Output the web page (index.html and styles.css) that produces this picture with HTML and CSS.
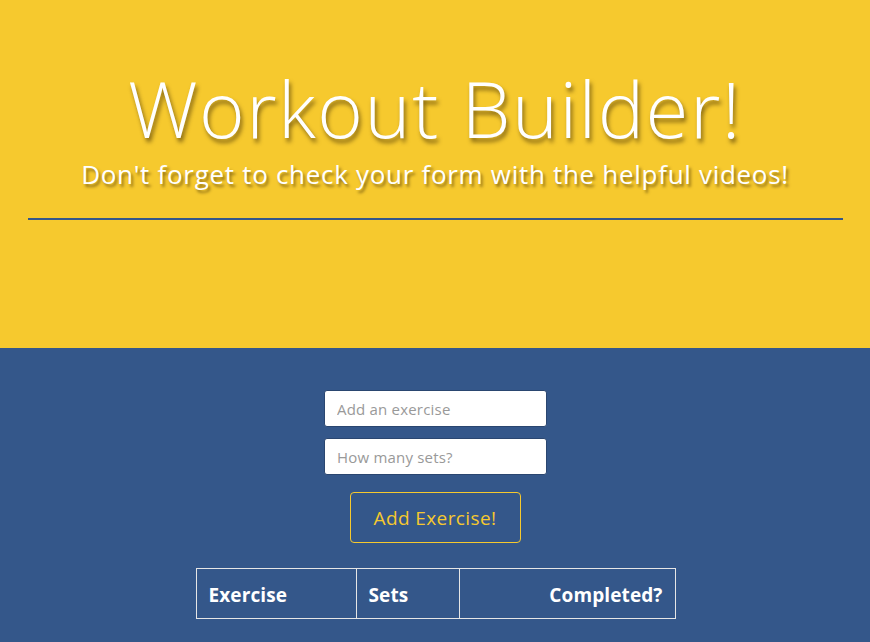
FILE: index.html
```html
<!DOCTYPE html>
<html>
<head>
<meta charset="utf-8">
<link rel="stylesheet" href="styles.css">
</head>
<body>
<header class="hero">
  <h1 class="title">Workout Builder!</h1>
  <p class="subtitle">Don't forget to check your form with the helpful videos!</p>
  <hr class="rule">
</header>
<main class="panel">
  <form class="form">
    <input class="field" type="text" placeholder="Add an exercise">
    <input class="field" type="text" placeholder="How many sets?">
    <button class="btn" type="button">Add Exercise!</button>
  </form>
  <table class="table">
    <thead>
      <tr>
        <th class="c1">Exercise</th>
        <th class="c2">Sets</th>
        <th class="c3">Completed?</th>
      </tr>
    </thead>
  </table>
</main>
</body>
</html>
```
FILE: styles.css
```css
html, body {
  margin: 0;
  padding: 0;
  height: 100%;
}
body {
  font-family: "Open Sans", "Noto Sans", sans-serif;
  background: #34578a;
  overflow: hidden;
}
.hero {
  background: #f6c92e;
  height: 348px;
  box-sizing: border-box;
  padding-top: 64px;
  text-align: center;
}
.title {
  margin: 0;
  color: #fff;
  font-weight: 300;
  font-size: 78px;
  line-height: 88px;
  letter-spacing: 1.5px;
  text-shadow: 2px 4px 4px rgba(60, 40, 0, 0.6);
}
.subtitle {
  margin: 2px 0 0;
  color: #fff;
  font-size: 26px;
  line-height: 40px;
  letter-spacing: 0.7px;
  text-shadow: 2px 3px 3px rgba(60, 40, 0, 0.55);
}
.rule {
  margin: 24px 27px 0 28px;
  border: 0;
  height: 2px;
  background: #34578a;
}
.panel {
  display: flex;
  flex-direction: column;
  align-items: center;
  padding-top: 42px;
}
.form {
  display: flex;
  flex-direction: column;
  align-items: center;
  gap: 11px;
}
.field {
  width: 223px;
  height: 37px;
  box-sizing: border-box;
  border: 1px solid #2a4670;
  border-radius: 3px;
  background: #fff;
  padding: 0 12px;
  font-family: "Open Sans", sans-serif;
  font-size: 15px;
  letter-spacing: 0.2px;
  color: #333;
  margin-left: 1px;
}
.field::placeholder {
  color: #999;
}
.btn {
  margin-top: 6px;
  width: 171px;
  height: 51px;
  background: transparent;
  border: 1px solid #f6c92e;
  border-radius: 4px;
  color: #f6c92e;
  font-family: "Open Sans", sans-serif;
  font-size: 19px;
  letter-spacing: 0.4px;
  cursor: pointer;
}
.table {
  margin-top: 25px;
  margin-left: 1px;
  border-collapse: collapse;
  color: #fff;
}
.table th {
  border: 1px solid #e6e6e6;
  height: 50px;
  box-sizing: border-box;
  padding: 2px 12px 0;
  font-size: 19px;
  font-weight: 700;
  letter-spacing: 0.1px;
  text-align: left;
}
.c1 { width: 160px; }
.c2 { width: 103px; }
.c3 { width: 216px; text-align: right !important; }
```
